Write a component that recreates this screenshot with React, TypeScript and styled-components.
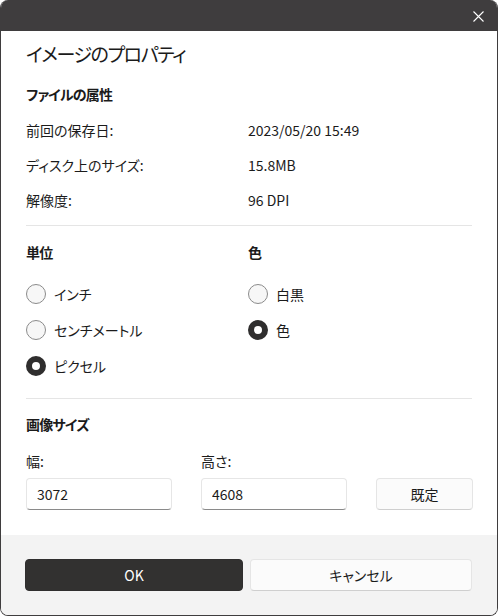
import React from "react";
import styled, { createGlobalStyle } from "styled-components";

const GlobalStyle = createGlobalStyle`
  html, body { margin: 0; padding: 0; background: #ffffff; }
  * { box-sizing: border-box; }
  body {
    font-family: "Noto Sans CJK JP", "Noto Sans", sans-serif;
    font-feature-settings: "palt";
    color: #1b1b1b;
  }
`;

const Window = styled.div`
  width: 498px;
  height: 616px;
  border: 1px solid #3f3d3e;
  border-top: none;
  border-radius: 8px;
  overflow: hidden;
  display: flex;
  flex-direction: column;
  background: #ffffff;
`;

const TitleBar = styled.div`
  height: 31px;
  background: #3f3d3e;
  display: flex;
  justify-content: flex-end;
  align-items: center;
  padding-right: 10px;
  flex-shrink: 0;
`;

const CloseButton = styled.button`
  width: 18px;
  height: 18px;
  border: none;
  background: transparent;
  padding: 0;
  display: flex;
  align-items: center;
  justify-content: center;
  margin-top: 1px;
`;

const Body = styled.div`
  flex: 1;
  padding: 9px 25px 0 25px;
  display: flex;
  flex-direction: column;
`;

const Title = styled.h1`
  margin: 0;
  font-size: 19px;
  line-height: 28px;
  font-weight: 400;
  letter-spacing: -1.4px;
`;

const SectionHeading = styled.h2<{ $mt: number }>`
  margin: ${(p) => p.$mt}px 0 0 0;
  font-size: 14px;
  line-height: 20px;
  font-weight: 700;
  letter-spacing: -0.8px;
`;

const InfoList = styled.div`
  margin-top: 8px;
  display: grid;
  grid-template-columns: 222px 1fr;
  grid-auto-rows: 35px;
  align-items: center;
  font-size: 14px;
`;

const Divider = styled.hr<{ $mt: number }>`
  margin: ${(p) => p.$mt}px 0 0 0;
  border: none;
  height: 1px;
  background: #e5e5e5;
`;

const TwoColumns = styled.div`
  display: grid;
  grid-template-columns: 222px 1fr;
`;

const Column = styled.div`
  display: flex;
  flex-direction: column;
`;

const RadioGroup = styled.div`
  margin-top: 14px;
  display: flex;
  flex-direction: column;
`;

const RadioRow = styled.label`
  height: 36px;
  display: flex;
  align-items: center;
  gap: 8px;
  font-size: 14px;
`;

const RadioCircle = styled.span<{ $checked: boolean }>`
  width: 20px;
  height: 20px;
  border-radius: 50%;
  flex-shrink: 0;
  background: ${(p) => (p.$checked ? "#ffffff" : "#f7f7f7")};
  border: ${(p) => (p.$checked ? "6px solid #2f2e2e" : "1px solid #8b8b8b")};
`;

const SizeGrid = styled.div`
  margin-top: 17px;
  display: grid;
  grid-template-columns: 146px 146px 97px;
  column-gap: 29px;
  row-gap: 7px;
  align-items: end;
  font-size: 14px;
`;

const FieldLabel = styled.div`
  line-height: 20px;
`;

const TextInput = styled.input`
  height: 32px;
  width: 100%;
  border: 1px solid #e6e6e6;
  border-bottom-color: #8a8a8a;
  border-radius: 4px;
  background: #ffffff;
  padding: 0 10px;
  font: inherit;
  font-size: 14px;
  color: #1b1b1b;
  outline: none;
`;

const Button = styled.button<{ $primary?: boolean }>`
  height: 32px;
  width: 100%;
  border-radius: 4px;
  font-family: inherit;
  font-feature-settings: "palt";
  font-size: 14px;
  font-weight: 400;
  border: 1px solid ${(p) => (p.$primary ? "#2f2e2e" : "#e5e5e5")};
  border-bottom-color: ${(p) => (p.$primary ? "#2f2e2e" : "#cfcfcf")};
  background: ${(p) => (p.$primary ? "#323130" : "#fbfbfb")};
  color: ${(p) => (p.$primary ? "#ffffff" : "#1b1b1b")};
`;

const Footer = styled.div`
  height: 80px;
  flex-shrink: 0;
  background: #f3f3f3;
  padding: 24px 25px 0 24px;
  display: grid;
  grid-template-columns: 218px 1fr;
  column-gap: 7px;
  align-items: start;
`;

const infoRows = [
  ["前回の保存日:", "2023/05/20 15:49"],
  ["ディスク上のサイズ:", "15.8MB"],
  ["解像度:", "96 DPI"],
];

const Radio = ({ label, checked }: { label: string; checked?: boolean }) => (
  <RadioRow>
    <RadioCircle $checked={!!checked} />
    {label}
  </RadioRow>
);

export default function App() {
  return (
    <>
      <GlobalStyle />
      <Window>
        <TitleBar>
          <CloseButton aria-label="close">
            <svg width="11" height="11" viewBox="0 0 11 11">
              <path d="M0.5 0.5 L10.5 10.5 M10.5 0.5 L0.5 10.5" stroke="#ffffff" strokeWidth="1.1" fill="none" />
            </svg>
          </CloseButton>
        </TitleBar>
        <Body>
          <Title>イメージのプロパティ</Title>
          <SectionHeading $mt={16}>ファイルの属性</SectionHeading>
          <InfoList>
            {infoRows.map(([k, v]) => (
              <React.Fragment key={k}>
                <span>{k}</span>
                <span>{v}</span>
              </React.Fragment>
            ))}
          </InfoList>
          <Divider $mt={8} />
          <TwoColumns>
            <Column>
              <SectionHeading $mt={16}>単位</SectionHeading>
              <RadioGroup>
                <Radio label="インチ" />
                <Radio label="センチメートル" />
                <Radio label="ピクセル" checked />
              </RadioGroup>
            </Column>
            <Column>
              <SectionHeading $mt={16}>色</SectionHeading>
              <RadioGroup>
                <Radio label="白黒" />
                <Radio label="色" checked />
              </RadioGroup>
            </Column>
          </TwoColumns>
          <Divider $mt={14} />
          <SectionHeading $mt={15}>画像サイズ</SectionHeading>
          <SizeGrid>
            <FieldLabel>幅:</FieldLabel>
            <FieldLabel>高さ:</FieldLabel>
            <span />
            <TextInput defaultValue="3072" />
            <TextInput defaultValue="4608" />
            <Button>既定</Button>
          </SizeGrid>
        </Body>
        <Footer>
          <Button $primary>OK</Button>
          <Button>キャンセル</Button>
        </Footer>
      </Window>
    </>
  );
}
